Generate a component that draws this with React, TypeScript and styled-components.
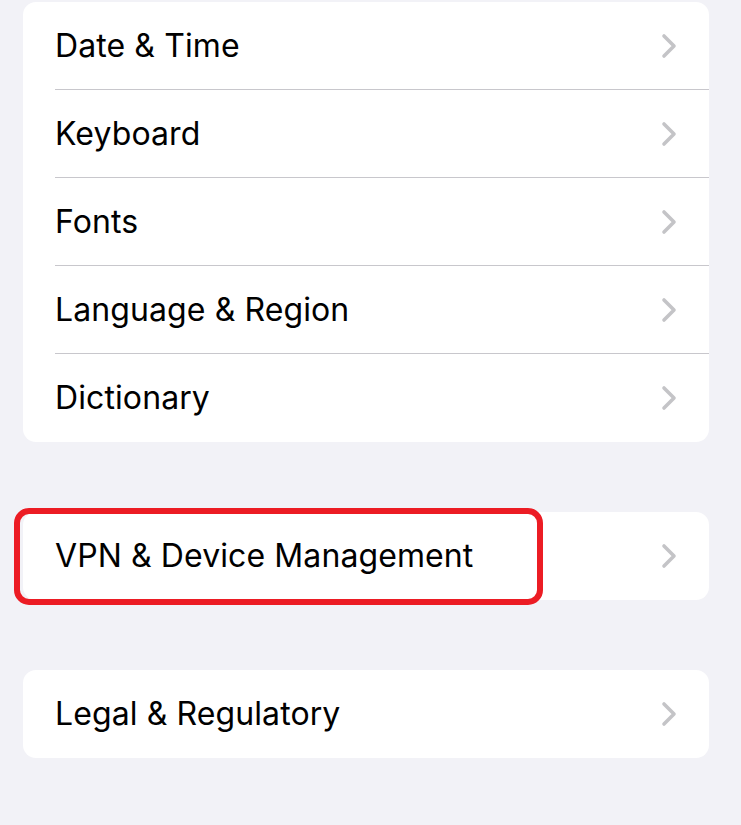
import React from "react";
import styled, { createGlobalStyle } from "styled-components";

const Global = createGlobalStyle`
  html, body {
    margin: 0;
    padding: 0;
    background: #f2f2f7;
  }
  body {
    font-family: Inter, "Noto Sans", "Liberation Sans", sans-serif;
    -webkit-font-smoothing: antialiased;
  }
`;

const Page = styled.div`
  width: 741px;
  height: 825px;
  overflow: hidden;
  box-sizing: border-box;
  padding: 2px 32px 0 23px;
  display: flex;
  flex-direction: column;
  gap: 70px;
  background: #f2f2f7;
`;

const Card = styled.div`
  position: relative;
  background: #ffffff;
  border-radius: 13px;
  display: flex;
  flex-direction: column;
`;

const Row = styled.div<{ $divider?: boolean }>`
  height: 88px;
  display: flex;
  align-items: center;
  padding-left: 32px;
  padding-right: 32px;
  box-sizing: border-box;
  position: relative;
  ${(p) =>
    p.$divider
      ? `&::after {
    content: "";
    position: absolute;
    left: 32px;
    right: 0;
    bottom: 0;
    height: 1px;
    background: #c8c7cc;
  }`
      : ""}
`;

const Label = styled.span`
  flex: 1;
  font-size: 32px;
  line-height: 1;
  color: #000000;
  letter-spacing: 0.1px;
`;

const Highlight = styled.div`
  position: absolute;
  left: -9px;
  top: -4px;
  width: 529px;
  height: 97px;
  box-sizing: border-box;
  border: 6px solid #ec1c24;
  border-radius: 15px;
  pointer-events: none;
`;

const Chevron = () => (
  <svg width="16" height="26" viewBox="0 0 16 26" fill="none">
    <path
      d="M3 3 L13 13 L3 23"
      stroke="#c4c4c7"
      strokeWidth="3.6"
      strokeLinecap="round"
      strokeLinejoin="round"
    />
  </svg>
);

const Item = ({ label, divider }: { label: string; divider?: boolean }) => (
  <Row $divider={divider}>
    <Label>{label}</Label>
    <Chevron />
  </Row>
);

export default function App() {
  const first = ["Date & Time", "Keyboard", "Fonts", "Language & Region", "Dictionary"];
  return (
    <>
      <Global />
      <Page>
        <Card>
          {first.map((l, i) => (
            <Item key={l} label={l} divider={i < first.length - 1} />
          ))}
        </Card>
        <Card>
          <Item label="VPN & Device Management" />
          <Highlight />
        </Card>
        <Card>
          <Item label="Legal & Regulatory" />
        </Card>
      </Page>
    </>
  );
}
